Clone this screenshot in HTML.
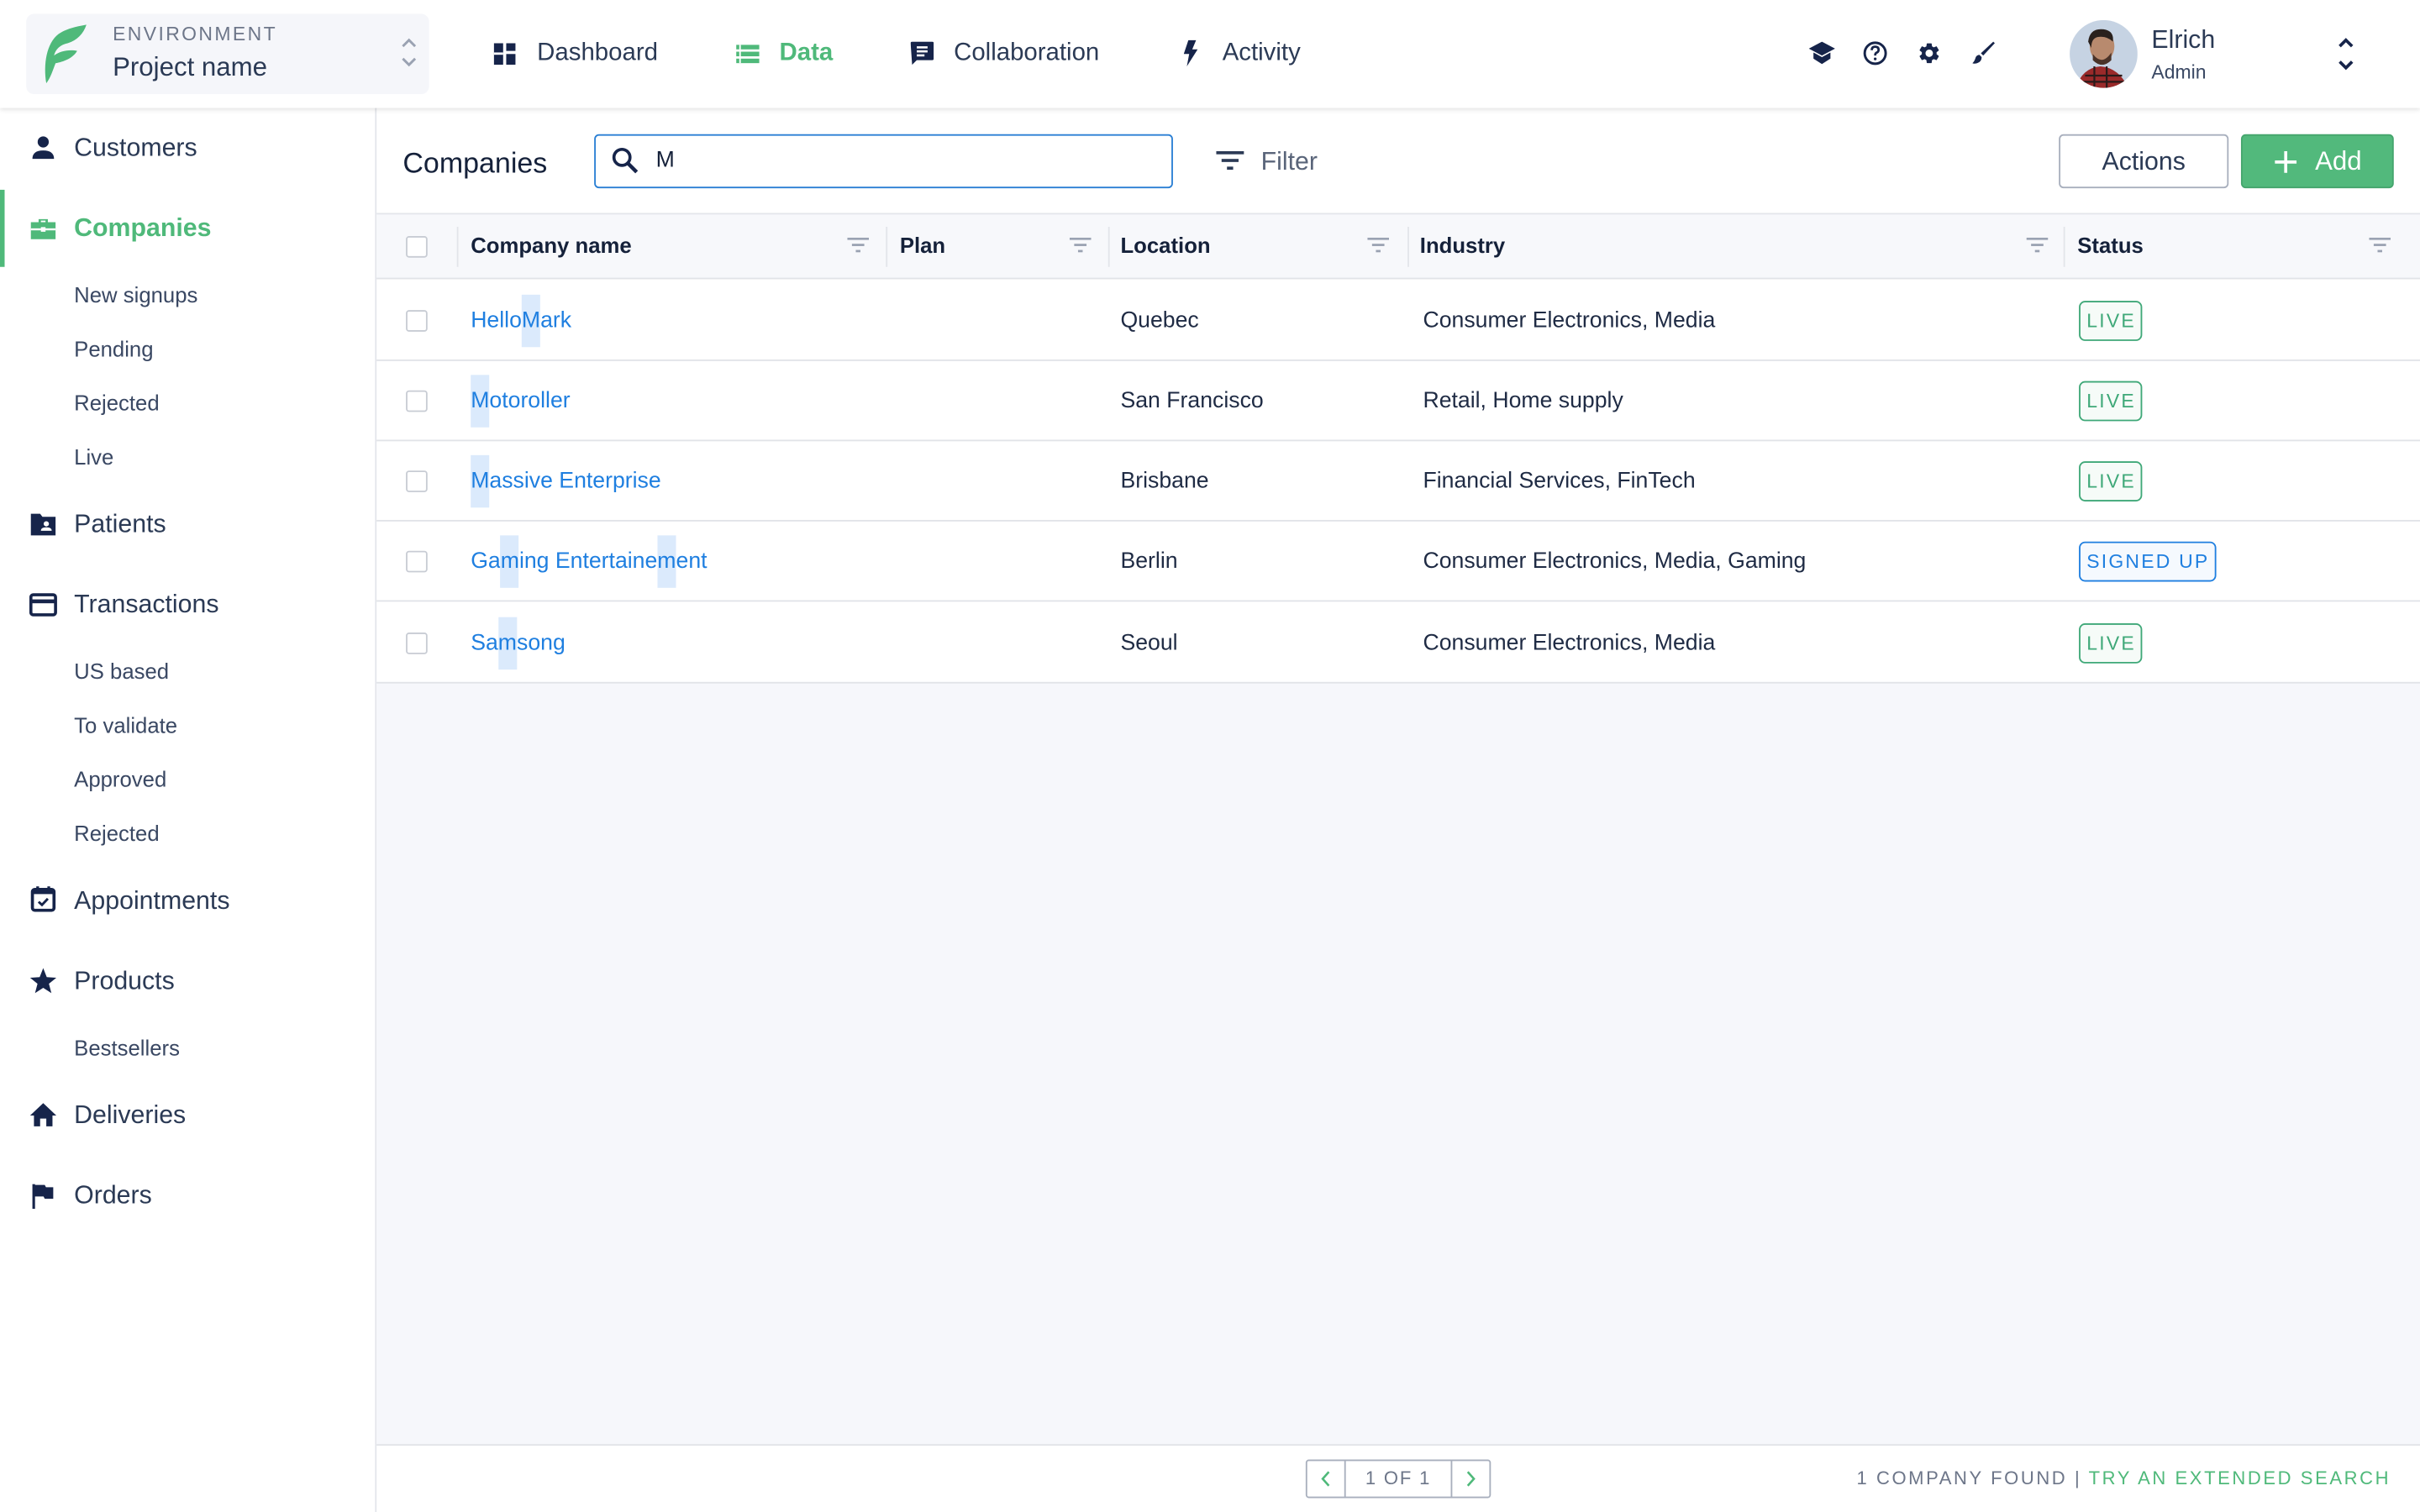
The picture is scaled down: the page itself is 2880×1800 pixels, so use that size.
<!DOCTYPE html>
<html><head><meta charset="utf-8"><style>
*{box-sizing:border-box;margin:0;padding:0}
html,body{width:2880px;height:1800px;overflow:hidden;background:#fff}
#w{position:absolute;left:0;top:0;width:1568px;height:980px;transform:scale(1.836735);transform-origin:0 0;font-family:"Liberation Sans",sans-serif;color:#2b3a55;background:#fff}
.a{position:absolute;white-space:nowrap}
.nav{font-size:16px;color:#2b3a55;top:26px}
.side{font-size:16.5px;color:#2b3a55;left:48px}
.sub{font-size:14px;color:#3a4863;left:48px}
.ic{position:absolute;left:19px;width:18px;height:18px}
.th{font-size:14px;font-weight:bold;color:#15213a;top:151px}
.td{font-size:14.5px;color:#1f2b44}
.ln{color:#1f7fe0}
.hl{background:#dbeafc;padding:9px 0}
.cb{position:absolute;left:263px;width:14px;height:14px;border:1.5px solid #c8ccd4;border-radius:2px;background:#fff}
.row{position:absolute;left:244px;width:1324px;height:1px;background:#e1e3e8}
.badge{position:absolute;left:1347px;height:26px;border:1.5px solid #3fa878;border-radius:4px;color:#3fa878;font-size:12.5px;letter-spacing:1.2px;padding:5px 3px 0 4px;background:#f6fbf8}
.fi{position:absolute;top:154px;width:14px;height:10px}
.vd{position:absolute;top:147px;width:1px;height:26px;background:#e3e5ea}
</style></head><body><div id="w">
<div class="a" style="left:0;top:0;width:1568px;height:70px;background:#fff;box-shadow:0 1px 3px rgba(0,0,0,.12);z-index:2"></div>
<div class="a" style="left:17px;top:9px;width:261px;height:52px;background:#f5f6fa;border-radius:5px;z-index:3"></div>
<svg class="a" style="left:24px;top:16px;z-index:4" width="34" height="40" viewBox="0 0 34 40"><path d="M6 38 C4 26 6 12 14 6 C20 2 27 1 32 0 C30 6 26 10 20 12 C15 13 12 16 11 20 C15 17 21 16 26 17 C23 22 17 24 12 25 C10 30 9 34 6 38Z" fill="#4fb97a"/></svg>
<div class="a" style="left:73px;top:15px;font-size:12.5px;letter-spacing:1.3px;color:#6d7689;z-index:4">ENVIRONMENT</div>
<div class="a" style="left:73px;top:34px;font-size:17px;color:#2b3a55;z-index:4">Project name</div>
<svg class="a" style="left:259px;top:22px;z-index:4" width="12" height="24" viewBox="0 0 12 24"><path d="M2 8 L6 4 L10 8 M2 16 L6 20 L10 16" stroke="#9aa2b2" stroke-width="1.6" fill="none"/></svg>
<div style="position:absolute;z-index:4;left:0;top:0">
<svg class="a" style="left:320px;top:28px" width="14" height="14" viewBox="0 0 14 14"><rect x="0" y="0" width="6" height="14" fill="#16244a"/><rect x="8" y="0" width="6" height="5" fill="#16244a"/><rect x="8" y="7" width="6" height="7" fill="#16244a"/><rect x="0" y="6" width="6" height="1.5" fill="#fff"/></svg>
<div class="a nav" style="left:348px">Dashboard</div>
<svg class="a" style="left:477px;top:29px" width="15" height="12" viewBox="0 0 15 12"><rect x="0" y="0" width="15" height="3" fill="#4fb97a"/><rect x="0" y="4.5" width="15" height="3" fill="#4fb97a"/><rect x="0" y="9" width="15" height="3" fill="#4fb97a"/><rect x="2" y="0" width="1" height="12" fill="#fff"/></svg>
<div class="a nav" style="left:505px;color:#4fb97a;font-weight:bold">Data</div>
<svg class="a" style="left:590px;top:27px" width="15" height="16" viewBox="0 0 15 16"><path d="M0 1 Q0 0 1 0 H14 Q15 0 15 1 V11 Q15 12 14 12 H4 L1 15 Z" fill="#16244a"/><rect x="4" y="3" width="7" height="1.4" fill="#fff"/><rect x="4" y="5.6" width="7" height="1.4" fill="#fff"/><rect x="4" y="8.2" width="5" height="1.4" fill="#fff"/></svg>
<div class="a nav" style="left:618px">Collaboration</div>
<svg class="a" style="left:767px;top:26px" width="9" height="17" viewBox="0 0 9 17"><path d="M3 0 H8 L5.5 6 H9 L2 17 L3.5 9 H0 Z" fill="#16244a"/></svg>
<div class="a nav" style="left:792px">Activity</div>
<svg class="a" style="left:1172px;top:27px" width="17" height="16" viewBox="0 0 17 16"><path d="M8.5 0 L17 4.5 L8.5 9 L0 4.5Z" fill="#16244a"/><path d="M3 7 V11 L8.5 14.5 L14 11 V7 L8.5 10Z" fill="#16244a"/></svg>
<svg class="a" style="left:1207px;top:26px" width="16" height="17" viewBox="0 0 16 17"><circle cx="8" cy="8.5" r="6.8" stroke="#16244a" stroke-width="1.6" fill="none"/><path d="M5.8 6.5 Q5.8 4.3 8 4.3 Q10.2 4.3 10.2 6.3 Q10.2 7.6 8.6 8.3 Q8 8.7 8 10" stroke="#16244a" stroke-width="1.5" fill="none"/><circle cx="8" cy="12.2" r="0.9" fill="#16244a"/></svg>
<svg class="a" style="left:1242px;top:26px" width="16" height="17" viewBox="0 0 24 24"><path fill="#16244a" d="M19.14 12.94c.04-.3.06-.61.06-.94s-.02-.64-.07-.94l2.030-1.58a.49.49 0 0 0 .12-.61l-1.92-3.32a.488.488 0 0 0-.59-.22l-2.39.96c-.5-.38-1.03-.7-1.62-.94l-.36-2.540a.484.484 0 0 0-.48-.41h-3.84c-.24 0-.43.17-.47.41l-.36 2.54c-.59.24-1.13.57-1.62.94l-2.39-.96c-.22-.08-.47 0-.59.22L2.74 8.87c-.12.21-.08.47.12.61l2.03 1.58c-.05.3-.09.63-.09.94s.02.64.07.94l-2.03 1.58a.49.49 0 0 0-.12.61l1.92 3.32c.12.22.37.29.59.22l2.39-.96c.5.38 1.03.7 1.62.94l.36 2.54c.05.24.24.41.48.41h3.84c.24 0 .44-.17.47-.41l.36-2.54c.59-.24 1.13-.56 1.62-.94l2.39.96c.22.08.47 0 .59-.22l1.92-3.32c.12-.22.07-.47-.12-.61l-2.01-1.58zM12 15.6c-1.98 0-3.6-1.62-3.6-3.6s1.62-3.6 3.6-3.6 3.6 1.62 3.6 3.6-1.62 3.6-3.6 3.6z"/></svg>
<svg class="a" style="left:1277px;top:26px" width="16" height="17" viewBox="0 0 16 17"><path d="M14.5 1 L15.5 2 L8 10 L6.5 8.5Z" fill="#16244a"/><path d="M5.5 9.5 L7 11 Q7 14 4 15 Q2 15.5 1 15 Q2.5 13.5 3 11.5 Q3.5 9.7 5.5 9.5Z" fill="#16244a"/></svg>
<svg class="a" style="left:1341px;top:13px" width="44" height="44" viewBox="0 0 44 44"><defs><clipPath id="c"><circle cx="22" cy="22" r="22"/></clipPath></defs><g clip-path="url(#c)"><rect width="44" height="44" fill="#c6d3e3"/><ellipse cx="21" cy="17" rx="8" ry="10" fill="#b88a6e"/><path d="M12 14 Q13 5 22 6 Q29 7 28 14 Q24 10 18 11 Q14 12 14 18Z" fill="#2a211d"/><path d="M15 22 Q21 30 27 21 L27 26 Q21 32 15 26Z" fill="#4a3328"/><path d="M4 44 Q8 31 20 30 Q32 31 38 44Z" fill="#9a2a2a"/><path d="M10 36 H34 M8 40 H36 M16 30 V44 M24 30 V44" stroke="#2b1a1a" stroke-width="1.2"/></g></svg>
<div class="a" style="left:1394px;top:17px;font-size:16.5px;color:#2b3a55">Elrich</div>
<div class="a" style="left:1394px;top:40px;font-size:12.5px;color:#3a4863">Admin</div>
<svg class="a" style="left:1513px;top:23px" width="14" height="24" viewBox="0 0 14 24"><path d="M3 7 L7 3 L11 7 M3 17 L7 21 L11 17" stroke="#16244a" stroke-width="2" fill="none"/></svg>
</div>
<div class="a" style="left:243px;top:70px;width:1px;height:910px;background:#e4e6eb"></div>
<div class="a" style="left:0;top:123px;width:3px;height:50px;background:#4fb97a"></div>
<svg class="ic" style="top:87px" viewBox="0 0 18 18"><circle cx="9" cy="5" r="3.6" fill="#16244a"/><path d="M2 16 Q2 10.5 9 10.5 Q16 10.5 16 16Z" fill="#16244a"/></svg>
<div class="a side" style="top:87px">Customers</div>
<svg class="ic" style="top:139px" viewBox="0 0 18 18"><path d="M6 3 H12 V5 H17 V16 H1 V5 H6Z M7.5 4 V5 H10.5 V4Z" fill="#4fb97a"/><rect x="1" y="9" width="16" height="1.3" fill="#fff"/><rect x="7.5" y="8.2" width="3" height="3" fill="#fff"/></svg>
<div class="a side" style="top:139px;color:#4fb97a;font-weight:bold">Companies</div>
<div class="a sub" style="top:183px">New signups</div>
<div class="a sub" style="top:218px">Pending</div>
<div class="a sub" style="top:253px">Rejected</div>
<div class="a sub" style="top:288px">Live</div>
<svg class="ic" style="top:331px" viewBox="0 0 18 18"><path d="M1 2 H7 L8.5 4 H17 V16 H1Z" fill="#16244a"/><circle cx="11" cy="8.5" r="1.7" fill="#fff"/><path d="M7.5 13 Q7.5 10.8 11 10.8 Q14.5 10.8 14.5 13Z" fill="#fff"/></svg>
<div class="a side" style="top:331px">Patients</div>
<svg class="ic" style="top:383px" viewBox="0 0 18 18"><rect x="1" y="2.5" width="16" height="13" rx="1.5" stroke="#16244a" stroke-width="2" fill="none"/><rect x="1" y="5.5" width="16" height="2.5" fill="#16244a"/></svg>
<div class="a side" style="top:383px">Transactions</div>
<div class="a sub" style="top:427px">US based</div>
<div class="a sub" style="top:462px">To validate</div>
<div class="a sub" style="top:497px">Approved</div>
<div class="a sub" style="top:532px">Rejected</div>
<svg class="ic" style="top:574px" viewBox="0 0 18 18"><rect x="2" y="2.5" width="14" height="13.5" rx="1.5" stroke="#16244a" stroke-width="2" fill="none"/><rect x="2" y="2.5" width="14" height="3" fill="#16244a"/><rect x="4.5" y="0.5" width="1.8" height="3" fill="#16244a"/><rect x="11.7" y="0.5" width="1.8" height="3" fill="#16244a"/><path d="M6 10.5 L8.2 12.5 L12 8.5" stroke="#16244a" stroke-width="1.6" fill="none"/></svg>
<div class="a side" style="top:575px">Appointments</div>
<svg class="ic" style="top:627px" viewBox="0 0 18 18"><path d="M9 0.5 L11.3 6.3 L17.5 6.7 L12.7 10.6 L14.3 16.7 L9 13.3 L3.7 16.7 L5.3 10.6 L0.5 6.7 L6.7 6.3Z" fill="#16244a"/></svg>
<div class="a side" style="top:627px">Products</div>
<div class="a sub" style="top:671px">Bestsellers</div>
<svg class="ic" style="top:714px" viewBox="0 0 18 18"><path d="M9 1 L17.5 9 H15 V16 H11 V11 H7 V16 H3 V9 H0.5Z" fill="#16244a"/></svg>
<div class="a side" style="top:714px">Deliveries</div>
<svg class="ic" style="top:766px" viewBox="0 0 18 18"><rect x="2" y="1.5" width="1.7" height="16" fill="#16244a"/><path d="M3.5 2 H10 L10.8 3.5 H15.5 V11 H10 L9.2 9.5 H3.5Z" fill="#16244a"/></svg>
<div class="a side" style="top:766px">Orders</div>
<div class="a" style="left:244px;top:442px;width:1324px;height:494px;background:#f6f7fb"></div>
<div class="a" style="left:244px;top:936px;width:1324px;height:1px;background:#e1e3e8"></div>
<div class="a" style="left:261px;top:95px;font-size:18.5px;color:#15213a">Companies</div>
<div class="a" style="left:385px;top:87px;width:375px;height:35px;border:1.5px solid #2a7fd4;border-radius:3px"></div>
<svg class="a" style="left:396px;top:95px" width="18" height="18" viewBox="0 0 18 18"><circle cx="7" cy="7" r="5.2" stroke="#16244a" stroke-width="2" fill="none"/><path d="M11 11 L16.5 16.5" stroke="#16244a" stroke-width="2.4"/></svg>
<div class="a" style="left:425px;top:96px;font-size:14.5px;color:#15213a">M</div>
<svg class="a" style="left:788px;top:97px" width="18" height="14" viewBox="0 0 18 14"><rect x="0" y="1" width="18" height="2" fill="#2b3a55"/><rect x="3.5" y="6" width="11" height="2" fill="#2b3a55"/><rect x="7" y="11" width="4" height="2" fill="#2b3a55"/></svg>
<div class="a" style="left:817px;top:96px;font-size:16.5px;color:#5a657a">Filter</div>
<div class="a" style="left:1334px;top:87px;width:110px;height:35px;border:1.5px solid #a8afbd;border-radius:3px;font-size:16.5px;color:#2b3a55;text-align:center;line-height:34px">Actions</div>
<div class="a" style="left:1452px;top:87px;width:99px;height:35px;background:#52b97c;border:1px solid #45a56d;border-radius:3px;font-size:17px;color:#fff;line-height:34px;padding-left:47px">Add</div>
<svg class="a" style="left:1473px;top:97px" width="16" height="16" viewBox="0 0 16 16"><path d="M8 1 V15 M1 8 H15" stroke="#fff" stroke-width="2"/></svg>
<div class="a" style="left:244px;top:138px;width:1324px;height:43px;background:#f7f8fb;border-top:1px solid #e4e6eb;border-bottom:1px solid #e1e3e8"></div>
<div class="cb" style="top:153px"></div>
<div class="vd" style="left:296px"></div><div class="vd" style="left:574px"></div><div class="vd" style="left:718px"></div><div class="vd" style="left:912px"></div><div class="vd" style="left:1337px"></div>
<div class="a th" style="left:305px">Company name</div>
<div class="a th" style="left:583px">Plan</div>
<div class="a th" style="left:726px">Location</div>
<div class="a th" style="left:920px">Industry</div>
<div class="a th" style="left:1346px">Status</div>
<svg class="fi" style="left:549px" viewBox="0 0 14 10"><rect y="0" width="14" height="1.5" fill="#9aa2b2"/><rect x="3" y="4" width="8" height="1.5" fill="#9aa2b2"/><rect x="5.5" y="8" width="3" height="1.5" fill="#9aa2b2"/></svg>
<svg class="fi" style="left:693px" viewBox="0 0 14 10"><rect y="0" width="14" height="1.5" fill="#9aa2b2"/><rect x="3" y="4" width="8" height="1.5" fill="#9aa2b2"/><rect x="5.5" y="8" width="3" height="1.5" fill="#9aa2b2"/></svg>
<svg class="fi" style="left:886px" viewBox="0 0 14 10"><rect y="0" width="14" height="1.5" fill="#9aa2b2"/><rect x="3" y="4" width="8" height="1.5" fill="#9aa2b2"/><rect x="5.5" y="8" width="3" height="1.5" fill="#9aa2b2"/></svg>
<svg class="fi" style="left:1313px" viewBox="0 0 14 10"><rect y="0" width="14" height="1.5" fill="#9aa2b2"/><rect x="3" y="4" width="8" height="1.5" fill="#9aa2b2"/><rect x="5.5" y="8" width="3" height="1.5" fill="#9aa2b2"/></svg>
<svg class="fi" style="left:1535px" viewBox="0 0 14 10"><rect y="0" width="14" height="1.5" fill="#9aa2b2"/><rect x="3" y="4" width="8" height="1.5" fill="#9aa2b2"/><rect x="5.5" y="8" width="3" height="1.5" fill="#9aa2b2"/></svg>
<div class="cb" style="top:201px"></div>
<div class="a td ln" style="left:305px;top:200px">Hello<span class="hl">M</span>ark</div>
<div class="a td" style="left:726px;top:200px">Quebec</div>
<div class="a td" style="left:922px;top:200px">Consumer Electronics, Media</div>
<div class="badge" style="top:195px">LIVE</div>
<div class="row" style="top:233px"></div>
<div class="cb" style="top:253px"></div>
<div class="a td ln" style="left:305px;top:252px"><span class="hl">M</span>otoroller</div>
<div class="a td" style="left:726px;top:252px">San Francisco</div>
<div class="a td" style="left:922px;top:252px">Retail, Home supply</div>
<div class="badge" style="top:247px">LIVE</div>
<div class="row" style="top:285px"></div>
<div class="cb" style="top:305px"></div>
<div class="a td ln" style="left:305px;top:304px"><span class="hl">M</span>assive Enterprise</div>
<div class="a td" style="left:726px;top:304px">Brisbane</div>
<div class="a td" style="left:922px;top:304px">Financial Services, FinTech</div>
<div class="badge" style="top:299px">LIVE</div>
<div class="row" style="top:337px"></div>
<div class="cb" style="top:357px"></div>
<div class="a td ln" style="left:305px;top:356px">Ga<span class="hl">m</span>ing Entertaine<span class="hl">m</span>ent</div>
<div class="a td" style="left:726px;top:356px">Berlin</div>
<div class="a td" style="left:922px;top:356px">Consumer Electronics, Media, Gaming</div>
<div class="badge" style="top:351px;border-color:#1f7fe0;color:#1f7fe0;background:#f5f9fe">SIGNED UP</div>
<div class="row" style="top:389px"></div>
<div class="cb" style="top:410px"></div>
<div class="a td ln" style="left:305px;top:409px">Sa<span class="hl">m</span>song</div>
<div class="a td" style="left:726px;top:409px">Seoul</div>
<div class="a td" style="left:922px;top:409px">Consumer Electronics, Media</div>
<div class="badge" style="top:404px">LIVE</div>
<div class="row" style="top:442px"></div>
<div class="a" style="left:846px;top:946px;width:120px;height:25px;border:1px solid #a8afbd;border-radius:2px"></div>
<div class="a" style="left:871px;top:946px;width:1px;height:25px;background:#a8afbd"></div>
<div class="a" style="left:940px;top:946px;width:1px;height:25px;background:#a8afbd"></div>
<svg class="a" style="left:855px;top:953px" width="8" height="11" viewBox="0 0 8 11"><path d="M6 1 L2 5.5 L6 10" stroke="#4fb97a" stroke-width="1.4" fill="none"/></svg>
<svg class="a" style="left:949px;top:953px" width="8" height="11" viewBox="0 0 8 11"><path d="M2 1 L6 5.5 L2 10" stroke="#4fb97a" stroke-width="1.4" fill="none"/></svg>
<div class="a" style="left:872px;top:951px;width:68px;text-align:center;font-size:12px;letter-spacing:1px;color:#6d7689">1 OF 1</div>
<div class="a" style="right:19px;top:951px;font-size:12px;letter-spacing:1.4px;color:#6d7689">1 COMPANY FOUND | <span style="color:#4fb97a">TRY AN EXTENDED SEARCH</span></div>
</div></body></html>
